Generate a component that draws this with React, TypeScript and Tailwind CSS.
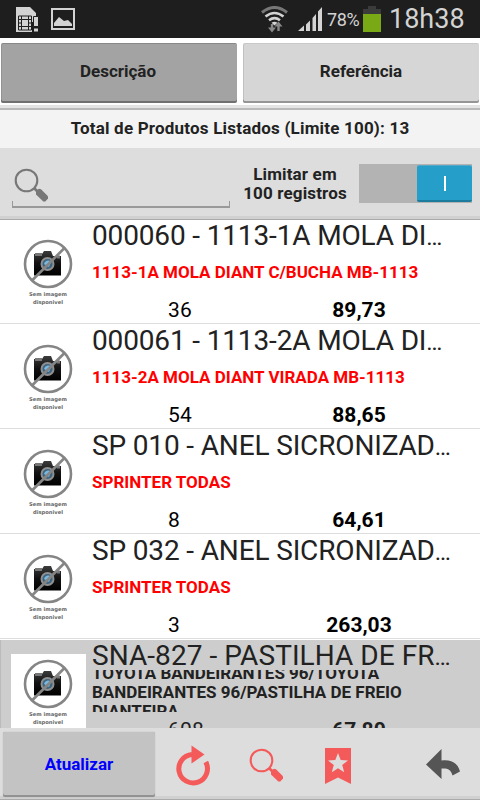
import type { ReactNode } from 'react';

type Product = {
  title: string;
  detail: string;
  quantity: string;
  price: string;
  selected?: boolean;
};

const PRODUCTS: Product[] = [
  { title: '000060 - 1113-1A MOLA DI', detail: '1113-1A MOLA DIANT C/BUCHA MB-1113', quantity: '36', price: '89,73' },
  { title: '000061 - 1113-2A MOLA DI', detail: '1113-2A MOLA DIANT VIRADA MB-1113', quantity: '54', price: '88,65' },
  { title: 'SP 010 - ANEL SICRONIZAD', detail: 'SPRINTER TODAS', quantity: '8', price: '64,61' },
  { title: 'SP 032 - ANEL SICRONIZAD', detail: 'SPRINTER TODAS', quantity: '3', price: '263,03' },
  {
    title: 'SNA-827 - PASTILHA DE FR',
    detail: 'TOYOTA BANDEIRANTES 96/TOYOTA\nBANDEIRANTES 96/PASTILHA DE FREIO\nDIANTEIRA',
    quantity: '608',
    price: '67,80',
    selected: true,
  },
];

function StatusBar() {
  return (
    <header className="flex h-[38px] shrink-0 items-center bg-[#1e1e1e] text-[#d3d3d3]">
      <svg className="ml-4 h-[27px] w-[23px]" viewBox="0 0 23 27">
        <path d="M0 1h14l6 6v9h-4v10H0z" fill="#d3d3d3" />
        <path d="M2.5 10h13v14h-13z" fill="none" stroke="#1e1e1e" />
        <path d="M5.5 10v14M12.5 10v14M3 13.5h3M3 17h3M3 20.5h3M12 13.5h3M12 17h3M12 20.5h3" stroke="#1e1e1e" />
        <path d="M5.5 13.5h7v7h-7z" fill="#d3d3d3" stroke="#1e1e1e" />
        <path d="M17.5 10.5h5v10h-5zM17.5 22h5v4h-5z" fill="#d3d3d3" stroke="#1e1e1e" />
      </svg>
      <svg className="ml-3 h-[22px] w-6" viewBox="0 0 24 22">
        <path d="M1 1h22v20H1z" fill="none" stroke="#d3d3d3" strokeWidth="2" />
        <path d="M3 18v-3l5-6 5 4 4-1 4 4v2z" fill="#d3d3d3" />
      </svg>
      <svg className="ml-[186px] h-[27px] w-[27px]" viewBox="0 0 27 27" fill="none">
        <path d="M1 6.5Q13.5-3.5 26 6.5" stroke="#777" strokeWidth="3" />
        <path d="M4.5 10.5Q13.5 3.5 22.5 10.5M8 14.2Q13.5 10 19 14.2" stroke="#d3d3d3" strokeWidth="2.6" />
        <path d="M10.5 16.8Q13.5 14.5 16.5 16.8L13.5 19.5z" fill="#d3d3d3" />
        <path d="M11 18v5M17.5 25v-5" stroke="#888" strokeWidth="2.4" />
        <path d="M7 21.5h8l-4 5zM13.5 20.5h8l-4-5z" fill="#888" />
      </svg>
      <svg className="ml-[9px] h-6 w-[26px]" viewBox="0 0 26 24" fill="#d3d3d3">
        <path d="M1 24l6-5.5V24zM9 17.5l4-4V24H9zM15.5 11l3.5-4v17h-3.5zM21 4.5L25 0v24h-4z" />
      </svg>
      <span className="ml-1 w-9 text-[18px] tracking-[-0.4px] whitespace-nowrap">78%</span>
      <svg className="h-[26px] w-[18px]" viewBox="0 0 18 26">
        <path d="M0 3h5V0h8v3h5v6H0z" fill="#3b3b3b" />
        <path d="M0 8h18v18H0z" fill="#79aa16" />
      </svg>
      <span className="ml-2 text-[27px] leading-[38px] whitespace-nowrap">18h38</span>
    </header>
  );
}

function Tab({ active, children }: { active?: boolean; children: ReactNode }) {
  return (
    <button
      className={`h-[60px] w-[236px] shrink-0 rounded-[2px] border-t pb-1 text-[17px] font-bold text-[#222] shadow-[inset_0_-2px_0_rgba(0,0,0,0.3),inset_1px_0_0_rgba(0,0,0,0.1)] ${
        active ? 'border-[#888] bg-[#a3a3a3] pr-[2px]' : 'border-[#c8c8c8] bg-[#d6d6d6]'
      }`}
    >
      {children}
    </button>
  );
}

function SearchIcon({ color, className }: { color: string; className?: string }) {
  return (
    <svg className={className} viewBox="0 0 34 34">
      <circle cx="12.5" cy="12.5" r="10.8" fill="none" stroke={color} strokeWidth="2.1" />
      <path d="M20 20l4 4" stroke={color} strokeWidth="2.6" />
      <path d="M22 24l1-2 2-1.2 2 .4 7 7 .3 2-3 3.300h-2L22 26.500z" fill={color} />
    </svg>
  );
}

function NoImage() {
  return (
    <div className="mt-[14px] ml-[11px] flex h-[75px] w-[75px] shrink-0 flex-col bg-white">
      <svg className="mt-[5px] ml-3 h-[50px] w-[50px] shrink-0" viewBox="0 0 50 50">
        <defs>
          <linearGradient id="body" x1="0" y1="0" x2="0" y2="1">
            <stop offset="0" stopColor="#3c3c3c" />
            <stop offset="0.5" stopColor="#111" />
            <stop offset="1" stopColor="#000" />
          </linearGradient>
        </defs>
        <path d="M11 17v-2h8l2-3h7l2 5h8v19.5H11z" fill="url(#body)" />
        <path d="M12 14h7v3h-7zM34 16.5h3v3h-3z" fill="#777" />
        <circle cx="24.5" cy="25" r="7" fill="#909090" />
        <circle cx="24.5" cy="25" r="5" fill="#3d6580" />
        <path d="M21 25a4 4 0 0 1 7-2l-2 5z" fill="#79b9df" />
        <circle cx="25" cy="25" r="23" fill="none" stroke="#858585" strokeWidth="2.6" />
        <path d="M9 41.5L41.5 9" stroke="#858585" strokeWidth="2.6" />
      </svg>
      <div className="mt-[2px] w-[74px] text-center font-['DejaVu_Sans',sans-serif] text-[5.2px] leading-[7.5px] font-bold text-[#666]">
        Sem imagem
        <br />
        disponivel
      </div>
    </div>
  );
}

function ProductRow({ product }: { product: Product }) {
  return (
    <li
      className={`flex h-[105px] shrink-0 overflow-hidden ${
        product.selected ? 'bg-[#cdcdcd] shadow-[inset_1px_0_0_#bbb]' : 'bg-white shadow-[inset_0_-1px_0_#fff,inset_0_-2px_0_#ddd]'
      }`}
    >
      <NoImage />
      <div className="ml-[6px] w-[358px]">
        <h2
          className={`h-[30px] text-[28px] leading-[31px] whitespace-nowrap text-[#222] ${
            product.selected ? 'tracking-[0.06px]' : 'tracking-[-0.15px]'
          }`}
        >
          {product.title}
          <span className="text-[24px] tracking-normal">…</span>
        </h2>
        <div
          className={`flex h-[42px] items-center overflow-hidden pt-[2px] text-[17px] leading-[19px] font-bold whitespace-pre ${
            product.selected ? 'text-[#222]' : 'text-[#f00]'
          }`}
        >
          {product.detail}
        </div>
        <div
          className={`grid grid-cols-2 pt-[3px] text-[21px] leading-[30px] ${
            product.selected ? 'text-[#222]' : 'text-black'
          }`}
        >
          <span className="pl-[76px] tracking-[0.2px]">{product.quantity}</span>
          <span className="pr-[3px] text-center font-bold">{product.price}</span>
        </div>
      </div>
    </li>
  );
}

function Toolbar() {
  return (
    <footer className="flex h-[72px] shrink-0 items-start border-b border-[#aaa] bg-[#ddd] shadow-[inset_0_-3px_0_#d0d0d0]">
      <button className="mt-1 ml-[3px] h-[65px] w-[152px] rounded-[2px] bg-[#c3c3c3] text-[17px] font-bold text-[#00f] shadow-[0_0_1px_#999,inset_0_-2px_0_#929292]">
        Atualizar
      </button>
      <svg className="mt-[16px] ml-[21px] h-[42px] w-[34px]" viewBox="0 0 34 42">
        <path d="M16 10.4A14.3 14.3 0 1 0 29.8 18" fill="none" stroke="#f45a5a" strokeWidth="5" />
        <path d="M15.5 1.5l13 9-13 9z" fill="#f45a5a" />
      </svg>
      <SearchIcon color="#f45a5a" className="mt-[20px] ml-[39px] h-[34px] w-[34px]" />
      <svg className="mt-5 ml-[42px] h-9 w-[26px]" viewBox="0 0 26 36">
        <path d="M0 0h26v36l-13-6.5L0 36z" fill="#f45a5a" />
        <path d="M13 5l2.7 7 7.3.4-5.8 4.6 2 7.2L13 20.2l-6.2 4 2-7.2L3 12.4l7.3-.4z" fill="#ddd" />
      </svg>
      <svg className="mt-[21px] ml-[75px] h-[30px] w-[34px]" viewBox="0 0 34 30">
        <path d="M0 15.5L15.5 0v11.5C25 10 32 14 34 22.5l-7.5 4C25 20.5 21.5 19 15.5 19.5V30z" fill="#555" />
      </svg>
    </footer>
  );
}

export default function App() {
  return (
    <div className="flex h-[800px] w-[480px] flex-col overflow-hidden bg-white font-['Roboto',sans-serif]">
      <StatusBar />
      <nav className="flex h-[67px] shrink-0 gap-[6px] px-px pt-[5px]">
        <Tab active>Descrição</Tab>
        <Tab>Referência</Tab>
      </nav>
      <div className="h-[5px] shrink-0 border-b-2 border-[#b9b9b9] bg-[#e4e4e4]" />
      <div className="h-[38px] shrink-0 bg-[#f3f3f3] text-center text-[17px] leading-[37px] font-bold tracking-[0.2px] text-[#222]">
        Total de Produtos Listados (Limite 100): 13
      </div>
      <section className="flex h-[72px] shrink-0 border-b border-[#aaa] bg-[#ddd] shadow-[inset_0_-3px_0_#d0d0d0]">
        <div className="ml-3 w-[218px]">
          <SearchIcon color="#777" className="mt-5 ml-[2px] h-[34px] w-[34px]" />
          <div className="-mt-px h-[7px] border-x border-b-2 border-[#999]" />
        </div>
        <div className="mt-[17px] ml-[10px] w-[110px] text-center text-[17px] leading-[19px] font-bold tracking-[0.15px] whitespace-nowrap text-[#222]">
          Limitar em
          <br />
          100 registros
        </div>
        <div className="mt-4 ml-[9px] flex h-[39px] w-[113px] justify-end bg-[#b3b3b3] pt-px">
          <div className="flex h-[37px] w-[55px] items-center justify-center rounded-[2px] border-t border-b-2 border-t-[#55a9c8] border-b-[#1b7c9d] bg-[#259fc9]">
            <span className="h-[15px] w-[2px] bg-white" />
          </div>
        </div>
      </section>
      <ul className="flex h-[508px] shrink-0 flex-col overflow-hidden">
        {PRODUCTS.map((product) => (
          <ProductRow key={product.title} product={product} />
        ))}
      </ul>
      <Toolbar />
    </div>
  );
}
